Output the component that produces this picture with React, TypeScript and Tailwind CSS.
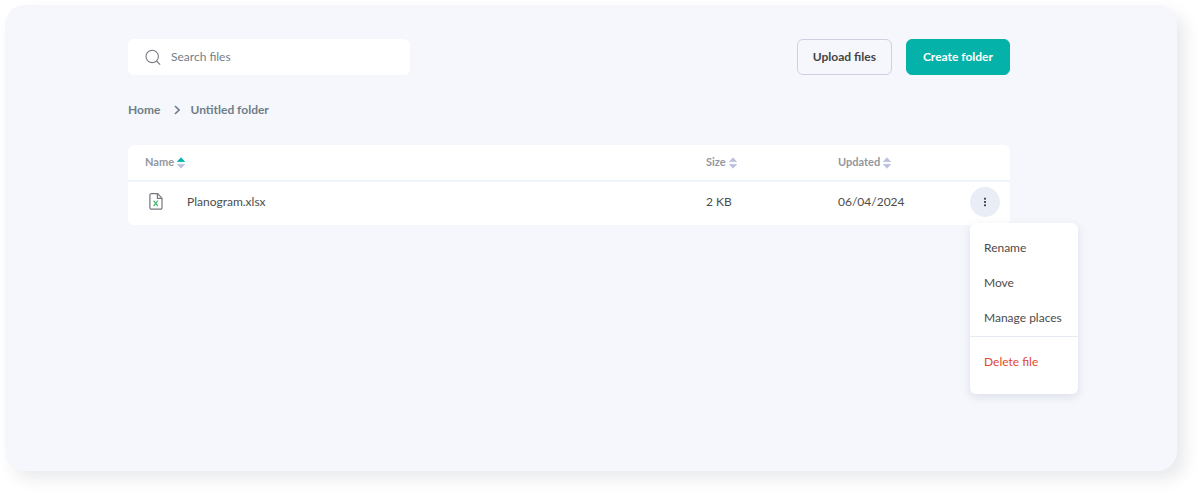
import React, { useState } from 'react'

type SortDir = 'asc' | 'none'

const files = [{ name: 'Planogram.xlsx', size: '2 KB', updated: '06/04/2024' }]

function SortIcon({ dir }: { dir: SortDir }) {
  return (
    <svg width="8" height="12" viewBox="0 0 8 12" strokeWidth="0.8" strokeLinejoin="round" aria-hidden="true">
      <path d="M4 0.8 7.6 4.6H0.4Z" fill={dir === 'asc' ? '#04b2a9' : '#bcc0dc'} stroke={dir === 'asc' ? '#04b2a9' : '#bcc0dc'} />
      <path d="M4 11.2 7.6 7.4H0.4Z" fill="#bcc0dc" stroke="#bcc0dc" />
    </svg>
  )
}

function SearchIcon() {
  return (
    <svg width="16" height="16" viewBox="0 0 16 16" fill="none" stroke="#777a80" strokeWidth="1.1" aria-hidden="true">
      <circle cx="7.2" cy="7.4" r="6.2" />
      <path d="M11.4 12 15.2 15.6" />
    </svg>
  )
}

function SheetIcon() {
  return (
    <svg width="14" height="17" viewBox="0 0 14 17" fill="none" aria-hidden="true">
      <path d="M2.3 0.7H8.6L13 5.2V14.8a1.4 1.4 0 0 1-1.4 1.4H2.3A1.4 1.4 0 0 1 .9 14.8V2.1A1.4 1.4 0 0 1 2.3.7Z" stroke="#77757e" strokeWidth="1.2" />
      <path d="M8.4 0.9V5.3H12.8" stroke="#77757e" strokeWidth="1.2" />
      <path d="M4.6 7.7 8.8 13M8.8 7.7 4.6 13" stroke="#4cba78" strokeWidth="1.3" />
    </svg>
  )
}

function HeaderCell({ label, dir }: { label: string; dir: SortDir }) {
  return (
    <button className="flex items-center gap-[3px] font-bold">
      {label}
      <SortIcon dir={dir} />
    </button>
  )
}

function FileMenu() {
  const item = 'flex h-[35px] w-full items-center px-3.5 text-left whitespace-nowrap'
  return (
    <div className="absolute top-full left-0 z-10 mt-1.5 min-w-[108px] rounded-md bg-white pt-2 pb-3.5 text-xs text-[#4c4c4c] shadow-[0_3px_10px_rgba(60,70,110,0.13)]">
      <button className={item}>Rename</button>
      <button className={item}>Move</button>
      <button className={item}>Manage places</button>
      <div className="border-t border-[#e6eaf3] pt-2">
        <button className={`${item} text-[#e0492f]`}>Delete file</button>
      </div>
    </div>
  )
}

export default function App() {
  const [search, setSearch] = useState('')
  const [menuOpen, setMenuOpen] = useState(true)

  return (
    <div className="min-h-screen bg-white pt-[5px] pr-[25px] pb-[25px] pl-[5px] font-['Lato','Liberation_Sans',sans-serif]">
      <main className="min-h-[calc(100vh-30px)] rounded-[20px] bg-[#f5f7fc] pt-[34px] pr-[167px] pb-10 pl-[123px] shadow-[8px_8px_16px_rgba(40,50,70,0.1)]">
        <div className="flex items-center justify-between">
          <label className="flex h-9 w-[282px] items-center gap-2.5 rounded-md bg-white px-[17px]">
            <SearchIcon />
            <input
              type="text"
              aria-label="Search files"
              placeholder="Search files"
              value={search}
              onChange={e => setSearch(e.target.value)}
              className="min-w-0 flex-1 bg-transparent text-xs text-[#4c4c4c] outline-none placeholder:text-[#73808a]"
            />
          </label>
          <div className="flex gap-3.5 text-xs font-bold">
            <button className="h-9 rounded-md border border-[#ccd0e2] px-[15px] text-[#444444]">Upload files</button>
            <button className="h-9 rounded-md border border-[#04b2a9] bg-[#04b2a9] px-4 text-white">Create folder</button>
          </div>
        </div>

        <nav className="mt-[25px] flex h-5 items-center text-xs font-bold text-[#6f7e88]">
          <a href="#home">Home</a>
          <svg className="mr-2.5 ml-3.5" width="6" height="10" viewBox="0 0 6 10" fill="none" stroke="#6f7e88" strokeWidth="1.6" aria-hidden="true">
            <path d="M1 1 5 5 1 9" />
          </svg>
          <a href="#folder">Untitled folder</a>
        </nav>

        <div className="mt-[25px] rounded-md bg-white pb-1">
          <table className="w-full table-fixed text-left">
            <thead>
              <tr className="h-9 border-b-2 border-[#eff3fa] text-[11px] text-[#92979f]">
                <th className="pl-[17px]"><HeaderCell label="Name" dir="asc" /></th>
                <th className="w-[132px]"><HeaderCell label="Size" dir="none" /></th>
                <th className="w-[132px]"><HeaderCell label="Updated" dir="none" /></th>
                <th className="w-10" aria-label="Actions" />
              </tr>
            </thead>
            <tbody>
              {files.map(file => (
                <tr key={file.name} className="h-10 text-xs text-[#4c4c4c]">
                  <td className="pl-[21px]">
                    <div className="flex items-center gap-6">
                      <SheetIcon />
                      {file.name}
                    </div>
                  </td>
                  <td>{file.size}</td>
                  <td>{file.updated}</td>
                  <td>
                    <div className="relative w-[30px]">
                      <button
                        aria-label="File actions"
                        aria-expanded={menuOpen}
                        onClick={() => setMenuOpen(!menuOpen)}
                        className="flex size-[30px] items-center justify-center rounded-full bg-[#e9edf5]"
                      >
                        <svg width="4" height="10" viewBox="0 0 4 10" fill="#444444" aria-hidden="true">
                          <rect x="1" y="0.8" width="2" height="1.8" />
                          <rect x="1" y="4.1" width="2" height="1.8" />
                          <rect x="1" y="7.4" width="2" height="1.8" />
                        </svg>
                      </button>
                      {menuOpen && <FileMenu />}
                    </div>
                  </td>
                </tr>
              ))}
            </tbody>
          </table>
        </div>
      </main>
    </div>
  )
}
